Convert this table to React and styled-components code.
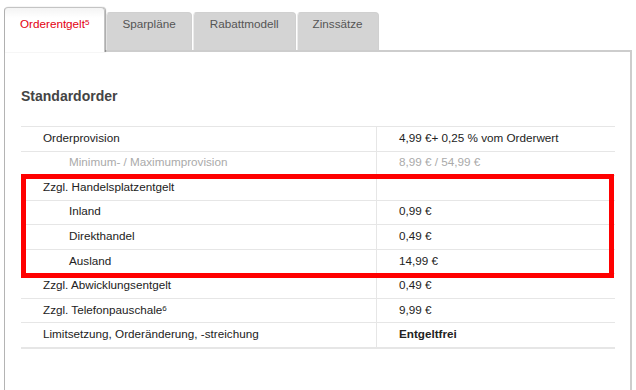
import React from "react";
import styled, { createGlobalStyle } from "styled-components";

const Global = createGlobalStyle`
  html, body { margin: 0; padding: 0; background: #fff; }
  body { font-family: "Liberation Sans", Arial, sans-serif; color: #222; }
  * { box-sizing: border-box; }
`;

const Page = styled.div`
  padding: 7px 4px 0 4px;
  height: 390px;
  overflow: hidden;
`;

const TabBar = styled.div`
  display: flex;
  align-items: flex-end;
  gap: 1px;
`;

const Tab = styled.div`
  position: relative;
  z-index: ${(p) => (p.$active ? 1 : 0)};
  height: ${(p) => (p.$active ? "45px" : "38px")};
  margin-bottom: ${(p) => (p.$active ? "-2px" : "0")};
  padding: ${(p) => (p.$active ? "9px" : "4px")} ${(p) => p.$pad}px 0;
  font-size: 11.7px;
  line-height: 14px;
  color: ${(p) => (p.$active ? "#e3000f" : "#555")};
  background: ${(p) =>
    p.$active ? "linear-gradient(#f4f4f4, #fff 10px)" : "#d4d4d4"};
  border: 1px solid ${(p) => (p.$active ? "#c4c4c4" : "#d0d0d0")};
  border-left-color: ${(p) => (p.$active ? "#b0b0b0" : "#ececec")};
  border-bottom: none;
  border-radius: 4px 4px 0 0;
  box-shadow: ${(p) => (p.$active ? "1px 0 1px rgba(0,0,0,0.35)" : "none")};
  white-space: nowrap;
  sup { font-size: 8px; vertical-align: 3px; line-height: 0; }
`;

const Panel = styled.div`
  border-top: 2px solid #cdcdcd;
  border-left: 1px solid #b4b4b4;
  border-right: 2px solid #cdcdcd;
  padding: 36px 15px 40px 16px;
  min-height: 400px;
`;

const Heading = styled.h2`
  margin: 0 0 22px;
  font-size: 14px;
  line-height: 16px;
  font-weight: bold;
  color: #444;
`;

const Table = styled.div`
  border-bottom: 2px solid #e6e6e6;
`;

const Group = styled.div`
  position: relative;
`;

const Highlight = styled.div`
  position: absolute;
  top: -1px;
  bottom: -5px;
  left: 0;
  right: 1px;
  border: 5px solid #ff0000;
  pointer-events: none;
`;

const Row = styled.div`
  display: grid;
  grid-template-columns: 356px 1fr;
  height: 24.55px;
  border-top: 1.5px solid #e6e6e6;
  font-size: 11.7px;
  line-height: 14px;
  color: ${(p) => (p.$muted ? "#aaa" : "#222")};
  sup { font-size: 8px; vertical-align: 3px; line-height: 0; }
`;

const Label = styled.div`
  display: flex;
  align-items: center;
  padding-left: ${(p) => (p.$level === 2 ? 48 : 22)}px;
  padding-bottom: 2px;
  border-right: 1.5px solid #e6e6e6;
`;

const Value = styled.div`
  display: flex;
  align-items: center;
  padding-left: 22px;
  padding-bottom: 2px;
  font-weight: ${(p) => (p.$bold ? "bold" : "normal")};
`;

const tabs = [
  { label: "Orderentgelt", note: "5", pad: 15, active: true },
  { label: "Sparpläne", pad: 15 },
  { label: "Rabattmodell", pad: 16 },
  { label: "Zinssätze", pad: 15 },
];

const FeeRow = ({ label, note, value, level = 1, muted, bold }) => (
  <Row $muted={muted}>
    <Label $level={level}>
      <span>
        {label}
        {note && <sup>{note}</sup>}
      </span>
    </Label>
    <Value $bold={bold}>{value}</Value>
  </Row>
);

export default function App() {
  return (
    <>
      <Global />
      <Page>
        <TabBar>
          {tabs.map((t) => (
            <Tab key={t.label} $active={t.active} $pad={t.pad}>
              {t.label}
              {t.note && <sup>{t.note}</sup>}
            </Tab>
          ))}
        </TabBar>
        <Panel>
          <Heading>Standardorder</Heading>
          <Table>
            <FeeRow label="Orderprovision" value="4,99 €+ 0,25 % vom Orderwert" />
            <FeeRow
              label="Minimum- / Maximumprovision"
              value="8,99 € / 54,99 €"
              level={2}
              muted
            />
            <Group>
              <FeeRow label="Zzgl. Handelsplatzentgelt" value="" />
              <FeeRow label="Inland" value="0,99 €" level={2} />
              <FeeRow label="Direkthandel" value="0,49 €" level={2} />
              <FeeRow label="Ausland" value="14,99 €" level={2} />
              <Highlight />
            </Group>
            <FeeRow label="Zzgl. Abwicklungsentgelt" value="0,49 €" />
            <FeeRow label="Zzgl. Telefonpauschale" note="6" value="9,99 €" />
            <FeeRow
              label="Limitsetzung, Orderänderung, -streichung"
              value="Entgeltfrei"
              bold
            />
          </Table>
        </Panel>
      </Page>
    </>
  );
}
